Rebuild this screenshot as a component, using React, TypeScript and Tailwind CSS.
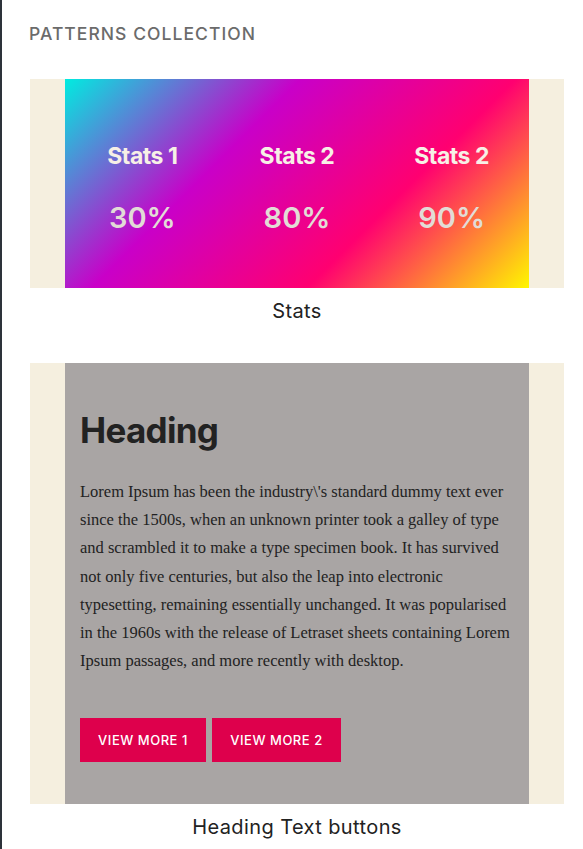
import React from 'react';

const stats = [
  { label: 'Stats 1', value: '30%' },
  { label: 'Stats 2', value: '80%' },
  { label: 'Stats 2', value: '90%' },
];

const loremLines = [
  "Lorem Ipsum has been the industry\\'s standard dummy text ever",
  'since the 1500s, when an unknown printer took a galley of type',
  'and scrambled it to make a type specimen book. It has survived',
  'not only five centuries, but also the leap into electronic',
  'typesetting, remaining essentially unchanged. It was popularised',
  'in the 1960s with the release of Letraset sheets containing Lorem',
  'Ipsum passages, and more recently with desktop.',
];

const Caption: React.FC<{ children: React.ReactNode }> = ({ children }) => (
  <p className="mt-[9px] text-center text-[20px] leading-[28px] text-[#222] tracking-[0.02em]">{children}</p>
);

const StatsPattern: React.FC = () => (
  <div className="bg-[#f5efdf] px-[35px]">
    <div className="h-[209px] grid grid-cols-3 pt-[63px] bg-[linear-gradient(135deg,#00ece0_0%,#c900c8_35%,#ff0070_67%,#fff700_100%)]">
      {stats.map((s, i) => (
        <div key={i} className="flex flex-col items-center">
          <h3 className="text-[23px] leading-[28px] font-bold text-[#f7f0e6] tracking-[-0.02em]">{s.label}</h3>
          <p className="mt-[30px] text-[29px] leading-[35px] font-semibold text-[#e2dcd6]">{s.value}</p>
        </div>
      ))}
    </div>
  </div>
);

const HeadingPattern: React.FC = () => (
  <div className="bg-[#f5efdf] px-[35px]">
    <div className="bg-[#a9a5a4] pl-[15px] pr-[10px] pt-[46px] pb-[42px]">
      <h2 className="text-[35px] leading-[42px] font-bold text-[#222] tracking-[-0.02em]">Heading</h2>
      <p
        className="mt-[27px] text-[16.5px] leading-[28.2px] text-[#222]"
        style={{ fontFamily: '"Liberation Serif", serif' }}
      >
        {loremLines.map((l, i) => (
          <span key={i} className="block whitespace-nowrap">{l}</span>
        ))}
      </p>
      <div className="mt-[43px] flex gap-[6px]">
        <button className="h-[44px] w-[126px] bg-[#de004c] text-white text-[13px] font-medium tracking-[0.04em]">VIEW MORE 1</button>
        <button className="h-[44px] w-[129px] bg-[#de004c] text-white text-[13px] font-medium tracking-[0.04em]">VIEW MORE 2</button>
      </div>
    </div>
  </div>
);

export default function App() {
  return (
    <div
      className="min-h-screen bg-white border-l-2 border-[#2d323a] pl-[28px] pr-[19px] pt-[21px] pb-[10px]"
      style={{ fontFamily: 'Inter, "Liberation Sans", sans-serif' }}
    >
      <h1 className="text-[17.5px] leading-[25px] font-medium text-[#6b6b6b] tracking-[0.06em] mb-[33px] -ml-[1px]">PATTERNS COLLECTION</h1>
      <section>
        <StatsPattern />
        <Caption>Stats</Caption>
      </section>
      <section className="mt-[38px]">
        <HeadingPattern />
        <Caption>Heading Text buttons</Caption>
      </section>
    </div>
  );
}
